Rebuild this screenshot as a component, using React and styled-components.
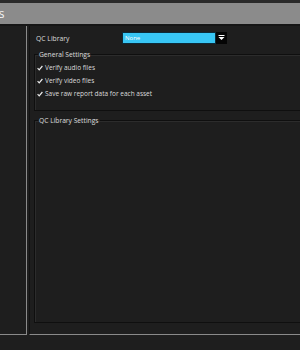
import styled, { createGlobalStyle } from 'styled-components';

const Global = createGlobalStyle`
    html, body {
        margin: 0;
        padding: 0;
        background: #1e1e1e;
    }
    body {
        font-family: "Open Sans", "Liberation Sans", Arial, sans-serif;
    }
`;

const Window = styled.div`
    width: 300px;
    height: 350px;
    display: flex;
    flex-direction: column;
    overflow: hidden;
    background: #1e1e1e;
`;

const TopStrip = styled.div`
    height: 3px;
    background: #2a2a2a;
`;

const Header = styled.div`
    height: 21px;
    background: #8b8b8b;
    display: flex;
    align-items: center;
    overflow: hidden;
    border-bottom: 2px solid #161616;
`;

/* только хвост заголовка виден у левого края */
const Title = styled.span`
    color: #f4f4f4;
    font-size: 12px;
    white-space: nowrap;
    margin-left: -40px;
`;

const Main = styled.div`
    flex: 1;
    display: flex;
    min-height: 0;
`;

const Sidebar = styled.div`
    width: 26px;
    flex-shrink: 0;
    border-right: 1px solid #8a8a8a;
    border-bottom: 1px solid #8a8a8a;
    margin-bottom: 15px;
`;

const Content = styled.div`
    flex: 1;
    margin-left: 2px;
    border-left: 1px solid #121212;
    border-bottom: 1px solid #8a8a8a;
    margin-bottom: 15px;
    padding: 6px 0 10px 4px;
    display: flex;
    flex-direction: column;
`;

const FieldRow = styled.div`
    display: flex;
    align-items: center;
    height: 12px;
    padding-left: 2px;
`;

const Label = styled.span`
    color: #dcdcdc;
    font-size: 6.8px;
    width: 86px;
`;

const Select = styled.div`
    display: flex;
    align-items: stretch;
    height: 12px;
`;

const SelectValue = styled.div`
    width: 94px;
    background: #38c6f4;
    border: 1px solid #0c2a38;
    box-sizing: border-box;
    color: #ffffff;
    font-size: 6px;
    padding-left: 2px;
    display: flex;
    align-items: center;
`;

const SelectButton = styled.div`
    width: 11px;
    background: #050505;
    display: flex;
    align-items: center;
    justify-content: center;
`;

const Group = styled.fieldset`
    margin: ${p => p.$top}px 0 0 0;
    padding: 2px 0 0 2px;
    border: 1px solid #0f0f0f;
    border-right: none;
    box-shadow: inset 1px 1px 0 #2c2c2c;
    height: ${p => p.$height}px;
    box-sizing: border-box;
    flex-shrink: 0;
`;

const Legend = styled.legend`
    color: #dcdcdc;
    font-size: 6.7px;
    padding: 0 1px;
    margin-left: 1px;
`;

const CheckRow = styled.div`
    display: flex;
    align-items: center;
    height: 13px;
    color: #dcdcdc;
    font-size: 6.5px;
    gap: 2px;
`;

function Check() {
    return (
        <svg width="6" height="6" viewBox="0 0 6 6">
            <path d="M0.6 3.2 L2.2 4.8 L5.4 1" stroke="#ececec" strokeWidth="1.2" fill="none" />
        </svg>
    );
}

function App() {
    return (
        <Window>
            <Global />
            <TopStrip />
            <Header>
                <Title>Settings</Title>
            </Header>
            <Main>
                <Sidebar />
                <Content>
                    <FieldRow>
                        <Label>QC Library</Label>
                        <Select>
                            <SelectValue>None</SelectValue>
                            <SelectButton>
                                <svg width="7" height="6" viewBox="0 0 7 6">
                                    <rect x="0.5" y="0" width="6" height="1" fill="#fff" />
                                    <path d="M0.5 2 L6.5 2 L3.5 5 Z" fill="#fff" />
                                </svg>
                            </SelectButton>
                        </Select>
                    </FieldRow>
                    <Group $top={6} $height={61}>
                        <Legend>General Settings</Legend>
                        <CheckRow><Check />Verify audio files</CheckRow>
                        <CheckRow><Check />Verify video files</CheckRow>
                        <CheckRow><Check />Save raw report data for each asset</CheckRow>
                    </Group>
                    <Group $top={5} $height={207}>
                        <Legend>QC Library Settings</Legend>
                    </Group>
                </Content>
            </Main>
        </Window>
    );
}

export default App;
